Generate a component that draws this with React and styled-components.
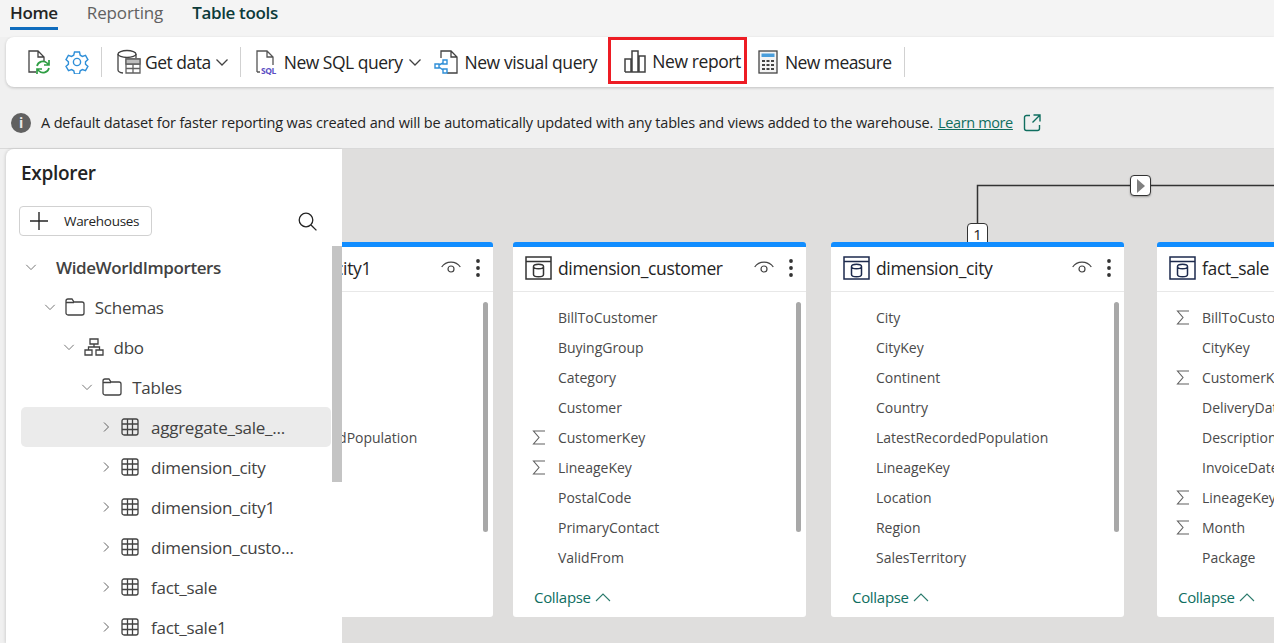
import styled, { createGlobalStyle } from "styled-components";

const FONT = `"Open Sans", "Noto Sans", sans-serif`;

const GlobalStyle = createGlobalStyle`
  html, body {
    margin: 0;
    padding: 0;
    background: #f0f0f0;
  }
  * {
    box-sizing: border-box;
  }
`;

/* ---------- icons ---------- */

const Line = styled.svg`
  display: block;
  flex: none;
  fill: none;
  stroke: ${(p) => p.$stroke || "#424242"};
  stroke-width: ${(p) => p.$width || 1.3};
`;

const RefreshDocIcon = () => (
  <Line width="24" height="26" viewBox="0 0 24 26">
    <path d="M9 23H2V2h9l6 6v4M11 2v6h6" />
    <path d="M10 17a6 6 0 0 1 10-3l2 2M22 11v5h-5M22 19a6 6 0 0 1-10 3l-2-2M10 25v-5h5" stroke="#2f9e44" strokeWidth="1.7" />
  </Line>
);

const GearIcon = () => (
  <Line width="24" height="24" viewBox="0 0 24 24" $stroke="#2f8fd8" $width="1.4">
    <circle cx="12" cy="12" r="3.6" />
    <path d="M9.5 2h5l.7 3.2 2.2 1.2 3.1-1 2.4 4.2-2.4 2.2v2.4l2.4 2.2-2.4 4.2-3.1-1-2.2 1.2-.7 3.1h-5l-.7-3.1-2.2-1.2-3.1 1L1 16.4l2.4-2.2v-2.4L1 9.6l2.4-4.2 3.1 1 2.2-1.2z" />
  </Line>
);

const DbTableIcon = () => (
  <Line width="24" height="26" viewBox="0 0 24 26">
    <ellipse cx="10" cy="5" rx="9" ry="3.5" />
    <path d="M1 5v16c0 1.5 2 2.6 5 3M19 5v4" />
    <path d="M9 10h14v14H9zM9 15h14M16 15v9M9 19.5h14" fill="#fff" stroke="#616161" />
    <path d="M9 10h14v5H9z" fill="#bdbdbd" stroke="#616161" />
  </Line>
);

const SqlDocIcon = () => (
  <Line width="24" height="26" viewBox="0 0 24 26" $stroke="#555">
    <path d="M1 23V2h10l6 6v8M11 2v6h6M1 23h3" />
    <SqlLabel x="5" y="25">SQL</SqlLabel>
  </Line>
);

const SqlLabel = styled.text`
  font-family: ${FONT};
  font-size: 8.5px;
  font-weight: 700;
  fill: #5b4fc4;
  stroke: none;
`;

const VisualQueryIcon = () => (
  <Line width="24" height="26" viewBox="0 0 24 26">
    <path d="M7 9V2h10l6 6v16H13M17 2v6h6" />
    <g stroke="#2f8fd8" strokeWidth="1.4">
      <path d="M1 15h4v4H1zM9 11h4v4H9zM9 20h4v4H9zM5 16l4-2M5 18l4 3" />
    </g>
  </Line>
);

const BarsIcon = () => (
  <Line width="22" height="24" viewBox="0 0 22 24" $width="1.5">
    <path d="M1 23V10h6v13M8 23V2h6v21M15 23V7h6v16zM1 23h20" />
  </Line>
);

const CalculatorIcon = () => (
  <Line width="20" height="24" viewBox="0 0 20 24" $stroke="#444">
    <rect x="1" y="1" width="18" height="22" fill="#f4f4f4" />
    <rect x="3.5" y="3.5" width="13" height="3.5" fill="#4a9edb" stroke="none" />
    <path d="M4 10h3v2H4zM8.5 10h3v2h-3zM13 10h3v2h-3zM4 14h3v2H4zM8.5 14h3v2h-3zM13 14h3v2h-3zM4 18h3v2H4zM8.5 18h3v2h-3zM13 18h3v2h-3z" fill="#444" stroke="none" />
  </Line>
);

const ChevronDown = ({ size = 14, stroke, width }) => (
  <Line width={size} height={size} viewBox="0 0 14 14" $stroke={stroke} $width={width}>
    <path d="M1.5 4.5 7 10l5.5-5.5" />
  </Line>
);

const ChevronRight = () => (
  <Line width="12" height="12" viewBox="0 0 12 12" $stroke="#616161" $width="1">
    <path d="M4 1.5 8.5 6 4 10.5" />
  </Line>
);

const ChevronUp = () => (
  <Line width="16" height="10" viewBox="0 0 16 10" $stroke="#2b7a6c" $width="1.1">
    <path d="M1 9 8 2l7 7" />
  </Line>
);

const ExternalIcon = () => (
  <Line width="18" height="18" viewBox="0 0 18 18" $stroke="#0f6e5f" $width="1.4">
    <path d="M7 1.5H3.5a2 2 0 0 0-2 2v11a2 2 0 0 0 2 2h11a2 2 0 0 0 2-2V11M10.5 1h6.5v6.5M17 1l-7.5 7.5" />
  </Line>
);

const PlusIcon = () => (
  <Line width="18" height="18" viewBox="0 0 18 18" $stroke="#242424" $width="1.4">
    <path d="M9 0v18M0 9h18" />
  </Line>
);

const SearchIcon = () => (
  <Line width="19" height="19" viewBox="0 0 19 19" $stroke="#242424" $width="1.3">
    <circle cx="8" cy="8" r="6.8" />
    <path d="m13 13 5.4 5.4" />
  </Line>
);

const FolderIcon = () => (
  <Line width="20" height="18" viewBox="0 0 20 18">
    <path d="M1 4V3a2 2 0 0 1 2-2h4l2 3h8a2 2 0 0 1 2 2v9a2 2 0 0 1-2 2H3a2 2 0 0 1-2-2zM1 4.5h8" />
  </Line>
);

const SchemaIcon = () => (
  <Line width="20" height="18" viewBox="0 0 20 18">
    <path d="M6 1h8v5H6zM1 12h7v5H1zM12 12h7v5h-7zM10 6v3M4.5 12V9h11v3" />
  </Line>
);

const TableIcon = () => (
  <Line width="20" height="18" viewBox="0 0 20 18">
    <rect x="1" y="1" width="16" height="16" rx="2" />
    <path d="M1 6h16M1 11.5h16M6.5 1v16M11.5 1v16" />
  </Line>
);

const DbCardIcon = ({ dark }) => (
  <Line width="27" height="24" viewBox="0 0 27 24" $stroke={dark ? "#1d2a4d" : "#333"} $width="1.5">
    <path d="M1 1h25v22H1zM1 5.5h25" />
    <path d="M8.5 10.5c0-3 10-3 10 0v8c0 3-10 3-10 0zM8.5 10.5c0 3 10 3 10 0" />
  </Line>
);

const EyeIcon = () => (
  <Line width="20" height="15" viewBox="0 0 20 15" $stroke="#444" $width="1.2">
    <path d="M.7 7C5 .5 15 .5 19.3 7" />
    <circle cx="10" cy="9" r="3" />
  </Line>
);

const KebabIcon = () => (
  <svg width="4" height="18" viewBox="0 0 4 18" fill="#333">
    <circle cx="2" cy="2" r="1.9" />
    <circle cx="2" cy="9" r="1.9" />
    <circle cx="2" cy="16" r="1.9" />
  </svg>
);

const SigmaIcon = () => (
  <Line width="14" height="15" viewBox="0 0 14 15" $stroke="#616161" $width="1.1">
    <path d="M13 1H1.5L7 7.5 1.5 14H13" />
  </Line>
);

/* ---------- data ---------- */

const CITY_FIELDS = [
  { name: "City" },
  { name: "CityKey" },
  { name: "Continent" },
  { name: "Country" },
  { name: "LatestRecordedPopulation" },
  { name: "LineageKey" },
  { name: "Location" },
  { name: "Region" },
  { name: "SalesTerritory" },
];

const CARDS = [
  { title: "dimension_city1", left: -142, fields: CITY_FIELDS },
  {
    title: "dimension_customer",
    left: 171,
    fields: [
      { name: "BillToCustomer" },
      { name: "BuyingGroup" },
      { name: "Category" },
      { name: "Customer" },
      { name: "CustomerKey", sum: true },
      { name: "LineageKey", sum: true },
      { name: "PostalCode" },
      { name: "PrimaryContact" },
      { name: "ValidFrom" },
    ],
  },
  { title: "dimension_city", left: 489, dark: true, fields: CITY_FIELDS },
  {
    title: "fact_sale",
    left: 815,
    dark: true,
    fields: [
      { name: "BillToCustomer", sum: true },
      { name: "CityKey" },
      { name: "CustomerKey", sum: true },
      { name: "DeliveryDate" },
      { name: "Description" },
      { name: "InvoiceDate" },
      { name: "LineageKey", sum: true },
      { name: "Month", sum: true },
      { name: "Package" },
    ],
  },
];

const TREE = [
  { level: 0, label: "WideWorldImporters", root: true },
  { level: 1, label: "Schemas", icon: <FolderIcon /> },
  { level: 2, label: "dbo", icon: <SchemaIcon /> },
  { level: 3, label: "Tables", icon: <FolderIcon /> },
  { level: 4, label: "aggregate_sale_...", icon: <TableIcon />, closed: true, selected: true },
  { level: 4, label: "dimension_city", icon: <TableIcon />, closed: true },
  { level: 4, label: "dimension_city1", icon: <TableIcon />, closed: true },
  { level: 4, label: "dimension_custo...", icon: <TableIcon />, closed: true },
  { level: 4, label: "fact_sale", icon: <TableIcon />, closed: true },
  { level: 4, label: "fact_sale1", icon: <TableIcon />, closed: true },
];

/* ---------- page ---------- */

function App() {
  return (
    <Page>
      <GlobalStyle />
      <Tabs>
        <Tab $active>Home</Tab>
        <Tab>Reporting</Tab>
        <Tab $strong>Table tools</Tab>
      </Tabs>

      <Ribbon>
        <IconSlot>
          <RefreshDocIcon />
        </IconSlot>
        <IconSlot>
          <GearIcon />
        </IconSlot>
        <Separator />
        <RibbonButton>
          <DbTableIcon />
          Get data
          <ChevronDown />
        </RibbonButton>
        <Separator />
        <RibbonButton $trail={12}>
          <SqlDocIcon />
          New SQL query
          <SplitChevron>
            <ChevronDown />
          </SplitChevron>
        </RibbonButton>
        <VisualQueryButton $gap={6}>
          <VisualQueryIcon />
          New visual query
        </VisualQueryButton>
        <Highlighted $gap={6}>
          <BarsIcon />
          New report
        </Highlighted>
        <MeasureButton $gap={7} $trail={15}>
          <CalculatorIcon />
          New measure
        </MeasureButton>
        <Separator />
      </Ribbon>

      <InfoBar>
        <InfoDot>i</InfoDot>
        A default dataset for faster reporting was created and will be automatically updated with any
        tables and views added to the warehouse.
        <LearnMore>Learn more</LearnMore>
        <ExternalIcon />
      </InfoBar>

      <Main>
        <Explorer>
          <ExplorerTitle>Explorer</ExplorerTitle>
          <ExplorerTools>
            <AddButton>
              <PlusIcon />
              Warehouses
            </AddButton>
            <SearchIcon />
          </ExplorerTools>
          <Tree>
            {TREE.map((node) => (
              <TreeRow key={node.label} $level={node.level} $selected={node.selected}>
                <ChevronBox>
                  {node.closed ? <ChevronRight /> : <ChevronDown size={12} stroke="#616161" width={1} />}
                </ChevronBox>
                {node.icon}
                <TreeLabel $root={node.root}>{node.label}</TreeLabel>
              </TreeRow>
            ))}
          </Tree>
          <TreeScrollbar />
        </Explorer>

        <Canvas>
          <Connector width="932" height="80" viewBox="0 0 932 80">
            <path d="M635.5 80V36.5H932" />
          </Connector>
          <FlowMarker>
            <FlowArrow />
          </FlowMarker>
          <CardinalityBadge>1</CardinalityBadge>
          {CARDS.map((card) => (
            <TableCard key={card.title} $left={card.left}>
              <CardHeader>
                <DbCardIcon dark={card.dark} />
                <CardTitle>{card.title}</CardTitle>
                <CardActions>
                  <EyeIcon />
                  <KebabIcon />
                </CardActions>
              </CardHeader>
              <FieldList>
                {card.fields.map((field) => (
                  <FieldRow key={field.name}>
                    <SigmaSlot>{field.sum && <SigmaIcon />}</SigmaSlot>
                    {field.name}
                  </FieldRow>
                ))}
                <FieldScrollbar />
              </FieldList>
              <Collapse>
                Collapse
                <ChevronUp />
              </Collapse>
            </TableCard>
          ))}
        </Canvas>
      </Main>
    </Page>
  );
}

const Page = styled.div`
  width: 1274px;
  height: 643px;
  overflow: hidden;
  display: flex;
  flex-direction: column;
  background: #f0f0f0;
  font-family: ${FONT};
`;

const Tabs = styled.div`
  display: flex;
  height: 37px;
  padding-left: 10px;
  gap: 29px;
  background: #f4f4f4;
`;

const Tab = styled.div`
  height: 30px;
  font-size: 17px;
  line-height: 26px;
  letter-spacing: ${(p) => (p.$active || p.$strong ? "-0.35px" : "-0.13px")};
  font-weight: ${(p) => (p.$active || p.$strong ? 600 : 400)};
  color: ${(p) => (p.$active ? "#242424" : p.$strong ? "#0c3b3a" : "#616161")};
  border-bottom: ${(p) => (p.$active ? "3px solid #0f6cbd" : "none")};
`;

const Ribbon = styled.div`
  display: flex;
  align-items: center;
  height: 50px;
  margin-left: 6px;
  padding-left: 21px;
  background: #fff;
  border-radius: 8px 0 0 8px;
  box-shadow: 0 1px 3px rgba(0, 0, 0, 0.2);
  z-index: 1;
`;

const IconSlot = styled.div`
  margin-right: 14px;

  & + & {
    margin-right: 15px;
  }
`;

const Separator = styled.div`
  width: 1px;
  height: 30px;
  margin: 0 15px 0 -3px;
  background: #d1d1d1;
`;

const RibbonButton = styled.div`
  display: flex;
  align-items: center;
  gap: ${(p) => p.$gap || 4}px;
  margin-right: ${(p) => p.$trail || 14}px;
  font-size: 17.5px;
  letter-spacing: -0.5px;
  color: #242424;
  white-space: nowrap;
`;

const SplitChevron = styled.span`
  margin-left: 2px;
`;

const VisualQueryButton = styled(RibbonButton)`
  letter-spacing: -0.4px;
`;

const MeasureButton = styled(RibbonButton)`
  letter-spacing: -0.58px;
`;

const Highlighted = styled(RibbonButton)`
  align-self: flex-start;
  height: 47px;
  padding: 0 3px 0 13px;
  margin: 0 11px 0 -3px;
  letter-spacing: -0.4px;
  border: 3px solid #ed1c24;
`;

const InfoBar = styled.div`
  display: flex;
  align-items: center;
  height: 61px;
  padding: 10px 0 0 11px;
  font-size: 14.5px;
  letter-spacing: -0.155px;
  color: #242424;
  white-space: pre;
  background: #f0f0f0;
`;

const InfoDot = styled.div`
  width: 20px;
  height: 20px;
  margin-right: 10px;
  border-radius: 50%;
  background: #616161;
  color: #e8e8e8;
  font-size: 14px;
  font-weight: 700;
  line-height: 20px;
  text-align: center;
`;

const LearnMore = styled.span`
  margin: 0 10px 0 5px;
  letter-spacing: -0.38px;
  color: #0f6e5f;
  text-decoration: underline;
`;

const Main = styled.div`
  flex: 1;
  display: flex;
  min-height: 0;
  padding-left: 6px;
  border-top: 1px solid #d9d9d9;
`;

const Explorer = styled.aside`
  position: relative;
  flex: none;
  width: 336px;
  padding: 12px 0 0 13px;
  background: #fff;
  border-top-left-radius: 8px;
  box-shadow: -1px 0 3px rgba(0, 0, 0, 0.12);
  overflow: hidden;
`;

const ExplorerTitle = styled.h2`
  margin: 0 0 21px 2px;
  font-size: 19px;
  line-height: 24px;
  font-weight: 600;
  letter-spacing: -0.3px;
  color: #242424;
`;

const ExplorerTools = styled.div`
  display: flex;
  align-items: center;
  justify-content: space-between;
  width: 298px;
  height: 30px;
`;

const AddButton = styled.div`
  display: flex;
  align-items: center;
  gap: 16px;
  width: 133px;
  height: 30px;
  padding-left: 10px;
  border: 1px solid #d1d1d1;
  border-radius: 4px;
  font-size: 13.5px;
  letter-spacing: -0.3px;
  color: #242424;
`;

const Tree = styled.div`
  margin: 11px 0 0 2px;
  width: 310px;
`;

const TreeRow = styled.div`
  display: flex;
  align-items: center;
  height: 40px;
  padding-left: ${(p) => 4 + p.$level * 18.75}px;
  background: ${(p) => (p.$selected ? "#ebebeb" : "transparent")};
  border-radius: 5px;
`;

const ChevronBox = styled.div`
  width: 12px;
  margin-right: 9px;
  flex: none;
`;

const TreeLabel = styled.span`
  margin-left: 10px;
  font-size: 17px;
  letter-spacing: ${(p) => (p.$root ? "-0.4px" : "-0.25px")};
  font-weight: ${(p) => (p.$root ? 600 : 400)};
  color: #424242;
  white-space: nowrap;
`;

const TreeScrollbar = styled.div`
  position: absolute;
  top: 97px;
  right: 0;
  width: 10px;
  height: 236px;
  background: #c4c4c4;
`;

const Canvas = styled.div`
  position: relative;
  flex: 1;
  overflow: hidden;
  background: #dfdedd;
`;

const Connector = styled.svg`
  position: absolute;
  top: 0;
  left: 0;
  fill: none;
  stroke: #333;
  stroke-width: 1.5;
`;

const FlowMarker = styled.div`
  position: absolute;
  top: 26px;
  left: 788px;
  display: flex;
  align-items: center;
  justify-content: center;
  width: 21px;
  height: 21px;
  background: #fff;
  border: 1px solid #333;
  border-radius: 4px;
  box-shadow: 0 1px 2px rgba(0, 0, 0, 0.3);
`;

const FlowArrow = styled.div`
  width: 0;
  height: 0;
  margin-left: 1px;
  border-style: solid;
  border-width: 7px 0 7px 8px;
  border-color: transparent transparent transparent #808080;
`;

const CardinalityBadge = styled.div`
  position: absolute;
  top: 74px;
  left: 625px;
  width: 21px;
  height: 22px;
  background: #fff;
  border: 1px solid #333;
  border-radius: 4px 4px 0 0;
  font-size: 15px;
  line-height: 20px;
  text-align: center;
  color: #242424;
`;

const TableCard = styled.div`
  position: absolute;
  top: 93px;
  left: ${(p) => p.$left}px;
  display: flex;
  flex-direction: column;
  width: 292.5px;
  height: 375px;
  background: #fff;
  border-top: 5px solid #118dff;
  border-radius: 3px;
`;

const CardHeader = styled.div`
  display: flex;
  align-items: center;
  flex: none;
  height: 45px;
  padding: 0 13px 3px 12px;
  border-bottom: 1px solid #e8e8e8;
`;

const CardTitle = styled.div`
  margin-left: 6px;
  font-size: 17.5px;
  letter-spacing: -0.35px;
  font-weight: 500;
  color: #242424;
  white-space: nowrap;
`;

const CardActions = styled.div`
  display: flex;
  align-items: center;
  gap: 15px;
  margin-left: auto;
`;

const FieldList = styled.div`
  position: relative;
  flex: 1;
  padding-top: 10px;
`;

const FieldRow = styled.div`
  display: flex;
  align-items: center;
  height: 30px;
  padding-left: 19px;
  font-size: 14px;
  letter-spacing: -0.02px;
  color: #4a4a4a;
  white-space: nowrap;
`;

const SigmaSlot = styled.span`
  flex: none;
  width: 26px;
`;

const FieldScrollbar = styled.div`
  position: absolute;
  top: 10px;
  right: 5px;
  width: 5px;
  height: 230px;
  background: #a8a8a8;
  border-radius: 3px;
`;

const Collapse = styled.div`
  display: flex;
  align-items: center;
  gap: 4px;
  flex: none;
  height: 40px;
  padding-left: 21px;
  font-size: 15px;
  letter-spacing: -0.3px;
  color: #0f6e5f;
`;

export default App;
